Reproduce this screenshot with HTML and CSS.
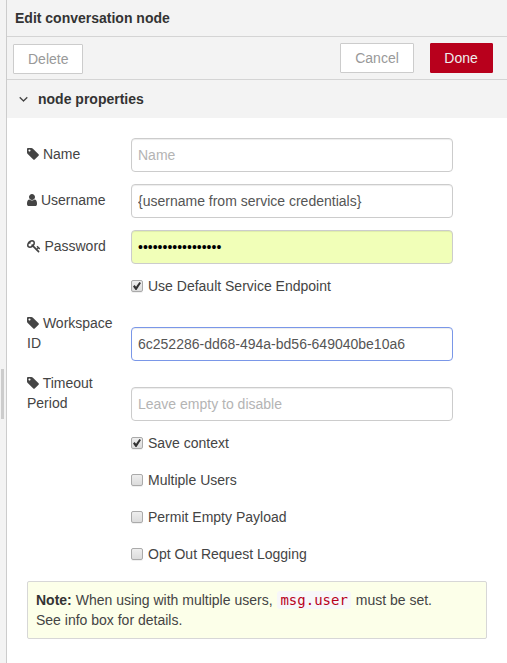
FILE: index.html
```html
<!DOCTYPE html>
<html lang="en">
<head>
<meta charset="utf-8">
<title>Edit conversation node</title>
<link rel="stylesheet" href="styles.css">
</head>
<body>
<svg class="defs" width="0" height="0" aria-hidden="true">
  <symbol id="tag" viewBox="0 0 1536 1792"><path d="M448 448q0-53-37.500-90.500t-90.500-37.500-90.500 37.500-37.500 90.500 37.500 90.500 90.500 37.500 90.500-37.500 37.500-90.500zm1067 576q0 53-37 90l-491 492q-39 37-91 37-53 0-90-37l-715-716q-38-37-64.500-101t-26.500-117v-416q0-52 38-90t90-38h416q53 0 117 26.500t102 64.500l715 714q37 39 37 91z"/></symbol>
  <symbol id="user" viewBox="0 0 1280 1792"><path d="M1280 1399q0 109-62.500 187t-150.500 78h-854q-88 0-150.500-78t-62.500-187q0-85 8.500-160.500t31.500-152 58.500-131 94-89 134.500-34.500q131 128 313 128t313-128q76 0 134.500 34.500t94 89 58.500 131 31.500 152 8.500 160.500zm-256-887q0 159-112.500 271.500t-271.500 112.500-271.500-112.500-112.500-271.500 112.500-271.500 271.500-112.500 271.500 112.500 112.500 271.500z"/></symbol>
  <symbol id="key" viewBox="0 0 1792 1792"><path d="M832 512q0-80-56-136t-136-56-136 56-56 136q0 42 19 83-41-19-83-19-80 0-136 56t-56 136 56 136 136 56 136-56 56-136q0-42-19-83 41 19 83 19 80 0 136-56t56-136zm851 704q0 17-49 66t-66 49q-9 0-28.500-16t-36.500-33-38.500-40-24.500-26l-96 96 220 220q28 28 28 68 0 42-39 81t-81 39q-40 0-68-28l-671-671q-176 131-365 131-163 0-265.500-102.500t-102.500-265.500q0-160 95-313t248-248 313-95q163 0 265.500 102.500t102.500 265.500q0 189-131 365l355 355 96-96q-3-3-26-24.500t-40-38.500-33-36.500-16-28.500q0-17 49-66t66-49q13 0 23 10 6 6 46 44.500t82 79.500 86.500 86 73 78 28.500 41z"/></symbol>
</svg>
<div class="app">
  <div class="separator"><div class="handle"></div></div>
  <main class="tray">
    <header class="title">Edit conversation node</header>
    <div class="toolbar">
      <button class="btn delete">Delete</button>
      <button class="btn cancel">Cancel</button>
      <button class="btn primary">Done</button>
    </div>
    <div class="section">
      <svg class="chevron" viewBox="0 0 1152 1792"><path d="M1075 736q0 13-10 23l-466 466q-10 10-23 10t-23-10l-466-466q-10-10-10-23t10-23l50-50q10-10 23-10t23 10l393 393 393-393q10-10 23-10t23 10l50 50q10 10 10 23z"/></svg>
      <span>node properties</span>
    </div>
    <form class="form">
      <div class="row">
        <label for="name"><svg class="icon tag"><use href="#tag"/></svg> Name</label>
        <input class="field" id="name" type="text" placeholder="Name">
      </div>
      <div class="row">
        <label for="username"><svg class="icon user"><use href="#user"/></svg> Username</label>
        <input class="field" id="username" type="text" value="{username from service credentials}">
      </div>
      <div class="row">
        <label for="password"><svg class="icon key"><use href="#key"/></svg> Password</label>
        <input class="field filled" id="password" type="password" value="12345678901234567">
      </div>
      <label class="check"><input type="checkbox" checked><span>Use Default Service Endpoint</span></label>
      <div class="row tall">
        <label for="workspace"><svg class="icon tag"><use href="#tag"/></svg> Workspace ID</label>
        <input class="field active" id="workspace" type="text" value="6c252286-dd68-494a-bd56-649040be10a6">
      </div>
      <div class="row tall">
        <label for="timeout"><svg class="icon tag"><use href="#tag"/></svg> Timeout Period</label>
        <input class="field" id="timeout" type="text" placeholder="Leave empty to disable">
      </div>
      <label class="check"><input type="checkbox" checked><span>Save context</span></label>
      <label class="check"><input type="checkbox"><span>Multiple Users</span></label>
      <label class="check"><input type="checkbox"><span>Permit Empty Payload</span></label>
      <label class="check"><input type="checkbox"><span>Opt Out Request Logging</span></label>
      <div class="tips"><b>Note:</b> When using with multiple users, <code>msg.user</code> must be set.<br>See info box for details.</div>
    </form>
  </main>
</div>
</body>
</html>
```
FILE: styles.css
```css
* { box-sizing: border-box; }
body {
  margin: 0;
  font: 14px/20px "Liberation Sans", Arial, sans-serif;
  color: #444;
  background: #fff;
  overflow: hidden;
}
.defs { display: block; }
.app { display: flex; height: 663px; }
.separator {
  flex: none;
  width: 7px;
  display: flex;
  align-items: flex-start;
  padding: 369px 0 0 1px;
  background: #f3f3f3;
  border-right: 1px solid #ccc;
}
.handle { width: 3px; height: 50px; background: #ccc; }
.tray { flex: 1; min-width: 0; }
.title {
  height: 37px;
  padding: 8px;
  font-weight: bold;
  color: #333;
  background: #f3f3f3;
  border-bottom: 1px solid #d4d4d4;
}
.toolbar {
  display: flex;
  align-items: flex-start;
  gap: 16px;
  height: 43px;
  padding: 6px 14px 0 6px;
  background: #f3f3f3;
  border-bottom: 1px solid #d4d4d4;
}
.btn {
  height: 30px;
  padding: 0 14px;
  font: inherit;
  line-height: 28px;
  color: #999;
  background: #fff;
  border: 1px solid #ccc;
  border-radius: 1px;
}
.delete { width: 70px; margin: 1px auto 0 0; }
.cancel { width: 74px; }
.primary { width: 63px; padding: 0 1px 0 0; color: #eee; background: #b8001c; border-color: #b8001c; }
.section {
  display: flex;
  align-items: center;
  gap: 10px;
  height: 38px;
  padding-left: 12px;
  font-weight: bold;
  color: #333;
  background: #f3f3f3;
}
.chevron { width: 9px; height: 14px; fill: #333; stroke: #333; stroke-width: 40; }
.form { padding: 20px; }
.row { display: flex; width: 426px; margin-bottom: 12px; }
.row label { flex: none; width: 104px; padding: 6px 12px 0 0; }
.tall { height: 48px; align-items: flex-end; }
.tall label { padding-top: 0; align-self: flex-start; }
.icon { display: inline-block; height: 14px; vertical-align: -2px; fill: #444; }
.tag { width: 12px; }
.user { width: 10px; }
.key { width: 14px; margin-right: -0.5px; }
.field {
  flex: 1;
  min-width: 0;
  height: 34px;
  padding: 0 6px;
  font: inherit;
  color: #555;
  background: #fff;
  border: 1px solid #ccc;
  border-radius: 4px;
  box-shadow: inset 0 1px 1px rgba(0, 0, 0, 0.075);
  outline: none;
}
.field::placeholder { color: #b4b4b4; opacity: 1; }
.filled { color: #000; background: #f1ffb8; }
.active { border-color: #7a97e8; }
.check {
  display: flex;
  align-items: center;
  gap: 5px;
  height: 20px;
  margin: 0 0 17px 104px;
}
.check input {
  appearance: none;
  flex: none;
  width: 12px;
  height: 12px;
  margin: 0;
  border: 1px solid #aaa;
  border-radius: 2px;
  background: linear-gradient(#eee, #dcdcdc);
  box-shadow: 0 1px 0 rgba(0, 0, 0, 0.06);
}
.check input:checked {
  display: grid;
  place-items: center;
}
.check input:checked::before {
  content: "";
  width: 8px;
  height: 8px;
  background: #333;
  clip-path: polygon(0 55%, 20% 38%, 38% 60%, 80% 0, 100% 14%, 44% 100%, 32% 100%);
}
.tips {
  width: 460px;
  height: 58px;
  padding: 8px;
  background: #fcffe9;
  border: 1px solid #d7d7d7;
  border-radius: 2px;
}
.tips b { color: #333; }
.tips code {
  margin: 0 1px;
  padding: 1px 3px;
  font: 14px "DejaVu Sans Mono", monospace;
  color: #b8001c;
  background: #f7f7f9;
  border-radius: 3px;
}
```
